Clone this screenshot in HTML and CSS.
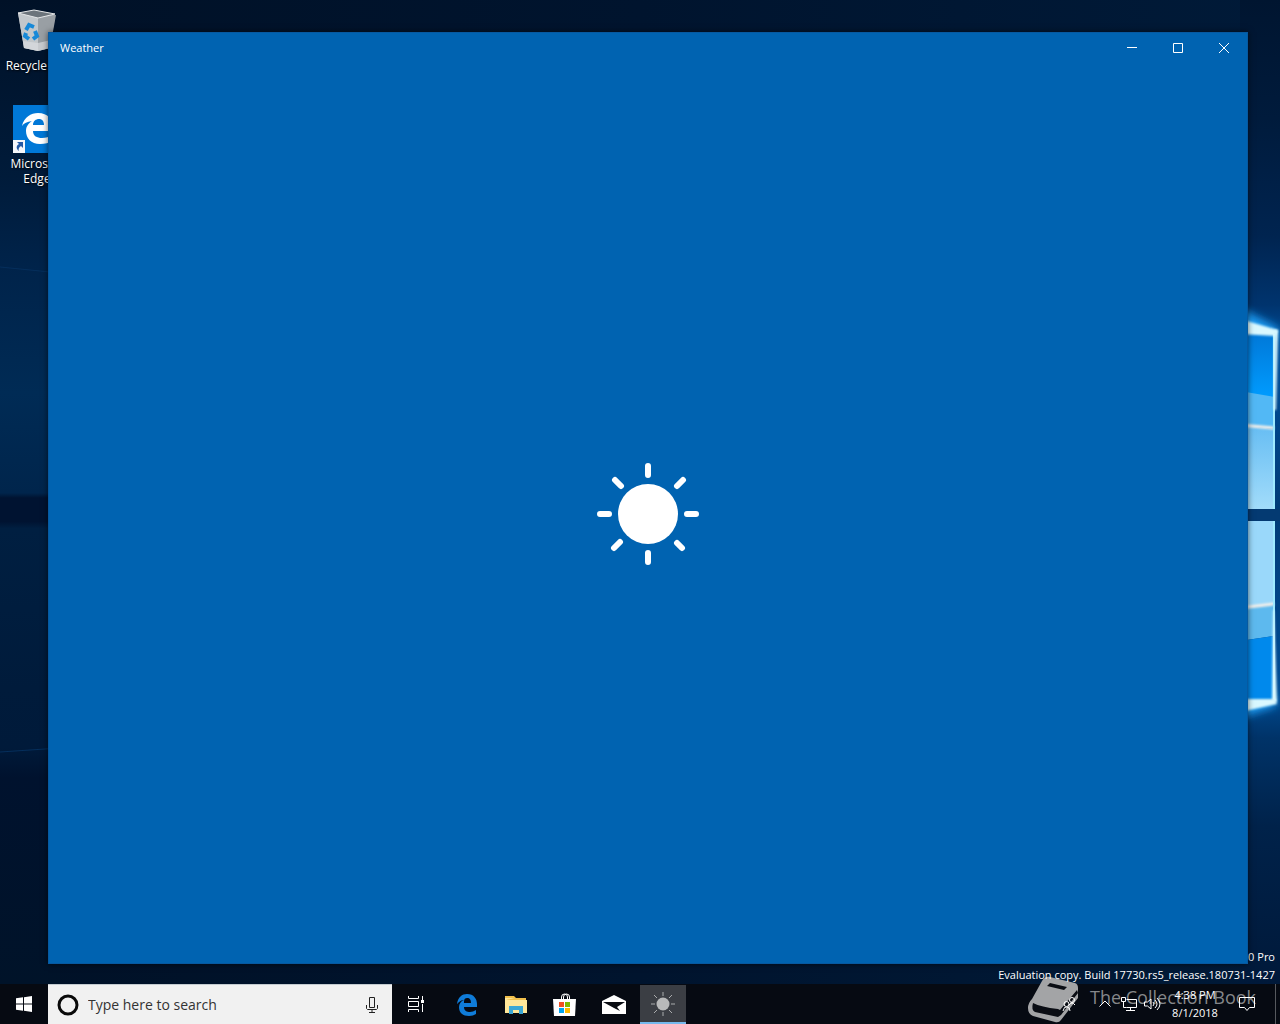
FILE: index.html
```html
<!DOCTYPE html>
<html lang="en">
<head>
<meta charset="utf-8">
<meta name="viewport" content="width=device-width, initial-scale=1">
<title>Desktop</title>
<link rel="stylesheet" href="styles.css">
</head>
<body>
<main class="desktop">
  <svg class="wallpaper wallpaper-left" viewBox="0 0 60 984" preserveAspectRatio="none" aria-hidden="true">
    <defs>
      <linearGradient id="night" x1="0" y1="0" x2="0" y2="1">
        <stop offset="0" stop-color="#001127"/><stop offset=".18" stop-color="#001b3a"/><stop offset=".27" stop-color="#00234a"/><stop offset=".4" stop-color="#002b55"/><stop offset=".501" stop-color="#00254c"/><stop offset=".506" stop-color="#001331"/><stop offset=".53" stop-color="#001331"/><stop offset=".537" stop-color="#001f41"/><stop offset=".7" stop-color="#001b3b"/><stop offset=".76" stop-color="#001a3a"/><stop offset=".79" stop-color="#00122e"/><stop offset="1" stop-color="#001329"/>
      </linearGradient>
    </defs>
    <path fill="url(#night)" d="M0 0h60v984H0z"/>
    <path d="M0 267l60 6M0 752l60-4" stroke="#052f5c" fill="none"/>
  </svg>
  <svg class="wallpaper wallpaper-right" viewBox="0 0 40 984" preserveAspectRatio="none" aria-hidden="true">
    <defs>
      <linearGradient id="sky" x1="0" y1="0" x2="0" y2="1">
        <stop offset="0" stop-color="#001530"/><stop offset=".12" stop-color="#001b3c"/><stop offset=".24" stop-color="#002450"/><stop offset=".31" stop-color="#00346e"/><stop offset=".35" stop-color="#00509c"/><stop offset=".52" stop-color="#003c78"/><stop offset=".7" stop-color="#004d96"/><stop offset=".75" stop-color="#003368"/><stop offset=".84" stop-color="#00224a"/><stop offset="1" stop-color="#00193a"/>
      </linearGradient>
      <linearGradient id="upper" x1="0" y1="0" x2="0" y2="1">
        <stop offset="0" stop-color="#0078d8"/><stop offset="1" stop-color="#009cff"/>
      </linearGradient>
      <linearGradient id="pane" x1="0" y1="0" x2="0" y2="1">
        <stop offset="0" stop-color="#66bdf3"/><stop offset="1" stop-color="#a2dcfa"/>
      </linearGradient>
      <filter id="soft" x="-50%" y="-50%" width="200%" height="200%"><feGaussianBlur stdDeviation="4"/></filter>
      <filter id="edge" x="-50%" y="-50%" width="200%" height="200%"><feGaussianBlur stdDeviation="1"/></filter>
    </defs>
    <path fill="url(#sky)" d="M0 0h40v984H0z"/>
    <path fill="#1f9df5" filter="url(#soft)" d="M0 308l38 20v10H0zM0 696h36v10L0 718z"/>
    <path fill="url(#upper)" d="M0 333h35v65L0 392z"/>
    <path fill="#52b8f5" d="M0 391l35 6v32L0 426z"/>
    <path fill="url(#pane)" d="M0 425l35 4v80H0z"/>
    <path fill="#043a72" d="M0 509h40v12H0z"/>
    <path fill="#9ad8fa" d="M0 521h35v84l-35 4z"/>
    <path fill="#5db9ee" d="M0 608l34-4v32l-34 5z"/>
    <path fill="#0089ec" d="M0 641l34-5v63H0z"/>
    <path fill="none" stroke="#f5f0ea" stroke-width="3" filter="url(#edge)" d="M0 425l34 3M0 608l34-4"/>
    <path fill="none" stroke="#9eeaff" stroke-width="2" d="M34 334v175M34 521v178"/>
    <path fill="#d9f8ff" filter="url(#edge)" d="M0 319l38 11-3 6-35-2zM0 699l35 0 2 5-37 8z"/>
    <path fill="#d9f8ff" filter="url(#edge)" d="M34 330h4l-2 80h-2zM33 610h1l3 92h-5z"/>
  </svg>

  <ul class="shortcuts">
    <li><a class="shortcut" href="#bin">
      <svg width="48" height="48" viewBox="0 0 48 48" aria-hidden="true">
        <path fill="#a8aeb4" d="M5 6l37 2-5 33-12 3-14-3z"/>
        <path fill="#c2c7cb" d="M5 6l20 5v33l-14-3z"/>
        <path fill="#999fa4" d="M25 11l18-3-6 33-12 3z"/>
        <path fill="#dadddf" opacity=".7" d="M10 34l15 2 13-3-1 8-12 3-14-3z"/>
        <path fill="#6c747b" stroke="#e5e7e8" d="M5 6l16-3 21 4-17 4z"/>
        <g fill="none" stroke="#1789d8" stroke-width="4"><path d="M13 23l3-5 5 2M22 24l2 5-4 3M16 32l-4-3 1-3"/></g>
      </svg>
      <span class="shortcut-name">Recycle Bin</span>
    </a></li>
    <li><a class="shortcut" href="#edge-browser">
      <svg width="48" height="48" viewBox="0 0 48 48" aria-hidden="true">
        <path fill="#0078d7" d="M0 0h48v48H0z"/>
        <path fill="#fff" d="M9 21C11 12 18 8 25 8c10 0 15 7 15 14v4H20c0 5 4 7 9 7 4 0 7-1 10-3v6c-3 2-7 3-12 3-9 0-14-6-14-13 0-5 3-8 6-10-5 1-8 2-10 5zM20 20h11c0-4-2-6-5-6s-6 2-6 6z"/>
        <path fill="#f5f7fa" d="M0 35h12v13H0z"/><path fill="#245aa5" d="M4 37h6v6l-2-2c-2 1-3 3-2 5-4-3-2-6 0-7z"/>
      </svg>
      <span class="shortcut-name">Microsoft<br>Edge</span>
    </a></li>
  </ul>

  <p class="build"><span>Windows 10 Pro</span><span>Evaluation copy. Build 17730.rs5_release.180731-1427</span></p>

  <section class="window" aria-label="Weather">
    <header class="titlebar">
      <h1 class="title">Weather</h1>
      <button class="caption" type="button" aria-label="Minimize"><svg width="10" height="10" viewBox="0 0 10 10"><path d="M0 4.500h10"/></svg></button>
      <button class="caption" type="button" aria-label="Maximize"><svg width="10" height="10" viewBox="0 0 10 10"><path d="M.5.5h9v9h-9z"/></svg></button>
      <button class="caption" type="button" aria-label="Close"><svg width="10" height="10" viewBox="0 0 10 10"><path d="M0 0l10 10M10 0L0 10"/></svg></button>
    </header>
    <div class="splash">
      <svg width="102" height="102" viewBox="-51 -51 102 102" role="img" aria-label="Sun">
        <circle r="30" fill="#fff"/>
        <path fill="none" stroke="#fff" stroke-width="6" stroke-linecap="round" d="M0-48v9M0 48v-9M-48 0h9M48 0h-9M-33-34l6 6M35-34l-6 6M-34 34l6-6M34 34l-5-5"/>
      </svg>
    </div>
  </section>
</main>

<footer class="taskbar">
  <div class="watermark" aria-hidden="true">
    <svg width="52" height="48" viewBox="0 0 52 48">
      <path fill="#a3a4a6" d="M14 5Q17 0 22 1l25 6q3 1 3 5v10L33 44q-2 3-6 2L5 40q-5-2-5-8 0-5 4-9z"/>
      <path fill="#0a0d14" d="M22 7l17 4-3 3-17-4zM5 27q8 4 25 6l2 1 17-20 1 3-17 22-3 2L7 36q-4-2-2-9z"/>
    </svg>
    <span>The Collection Book</span>
  </div>
  <button class="start" type="button" aria-label="Start"><svg width="16" height="16" viewBox="0 0 16 16"><path fill="#fff" d="M0 2.300L7 1.300v6.200H0zM8 1.200L16 0v7.500H8zM0 8.500h7v6.200l-7-1zM8 8.500h8V16l-8-1.200z"/></svg></button>
  <label class="search">
    <svg width="22" height="22" viewBox="0 0 22 22" aria-hidden="true"><circle cx="11" cy="11" r="9" fill="none" stroke="#0a0a0a" stroke-width="3"/></svg>
    <input type="text" placeholder="Type here to search" aria-label="Search">
    <svg width="12" height="18" viewBox="0 0 12 18" fill="none" stroke="#222" aria-hidden="true"><path d="M3.500 1.500h5v10h-5zM.5 9v3.500l1 1h9l1-1V9M6 14v3M3 16.500h6"/></svg>
  </label>
  <button class="taskview" type="button" aria-label="Task View"><svg width="18" height="16" viewBox="0 0 18 16" fill="none" stroke="#fff"><path d="M1.500 0v2.500h10V0M1.500 5.500h10v5h-10zM1.500 16v-2.500h10V16M15.500 0v4M15.500 8v8"/><path fill="#fff" stroke="none" d="M14 4h3v3h-3z"/></svg></button>
  <nav class="apps" aria-label="Apps">
    <button type="button" aria-label="Microsoft Edge"><svg width="22" height="22" viewBox="0 0 22 22"><path fill="#0f7cd9" d="M1 10C2 3 6 0 11 0c7 0 10 5 10 10v3H8c0 4 3 5 6 5 2 0 4-1 6-2v4c-2 1-4 2-7 2-6 0-10-3-10-9 0-3 2-6 5-7-3 0-5 2-7 4zM8 9h7c0-3-1-5-4-5S8 7 8 9z"/></svg></button>
    <button type="button" aria-label="File Explorer"><svg width="22" height="20" viewBox="0 0 22 20"><path fill="#f1c04c" d="M0 1h9l2 2h10v15H0z"/><path fill="#ffe79a" d="M1 5h21v13H0V3h10z"/><path fill="#3ba7d5" d="M4 11h14v8h-4v-4H8v4H4z"/></svg></button>
    <button type="button" aria-label="Microsoft Store"><svg width="24" height="24" viewBox="0 0 24 24"><path fill="none" stroke="#fff" d="M8.500 7V4q0-3 3-3t3 3v3M10.500 7V4q0-3 3-3t3 3v3"/><path fill="#fff" d="M0 6h23l-1 17H1z"/><path fill="#f25022" d="M6 9h5v5H6z"/><path fill="#7fba00" d="M12 9h5v5h-5z"/><path fill="#00a4ef" d="M6 15h5v5H6z"/><path fill="#ffb900" d="M12 15h5v5h-5z"/></svg></button>
    <button type="button" aria-label="Mail"><svg width="24" height="20" viewBox="0 0 24 20"><path fill="#fff" d="M0 6l12-6 12 6v13H0z"/><path fill="#090c12" d="M1 7h22l-8 5 3 4-6-3z"/></svg></button>
    <button class="active" type="button" aria-label="Weather"><svg width="24" height="24" viewBox="-12 -12 24 24"><circle r="6.500" fill="#b8b9ba"/><path stroke="#aaacad" d="M0-8v-4M0 8v4M-8 0h-4M8 0h4M-6-6l-3-3M6-6l3-3M-6 6l-3 3M6 6l3 3"/></svg></button>
  </nav>
  <div class="tray">
    <button class="people" type="button" aria-label="People"><svg width="14" height="16" viewBox="0 0 14 16"><circle cx="10" cy="4" r="2.500"/><circle cx="4.500" cy="8" r="2.500"/><path d="M7 9q3-4 6 0M1 15q1-5 4-4 3 0 3 4"/></svg></button>
    <button class="tray-icon" type="button" aria-label="Show hidden icons"><svg width="12" height="8" viewBox="0 0 12 8"><path d="M.5 6.500L6 1l5.500 5.500"/></svg></button>
    <button class="tray-icon" type="button" aria-label="Network"><svg width="16" height="16" viewBox="0 0 16 16"><path d="M5.500 3.500h10v8h-10M9.500 11.500v3M5 14.500h9M.5 1.500h4v4h-4zM2.500 5.500v6h3"/></svg></button>
    <button class="tray-icon" type="button" aria-label="Volume"><svg width="18" height="14" viewBox="0 0 18 14"><path d="M.5 5v4h3L7 12V2L3.500 5zM9 5q2 2 0 4M11 3q4 4 0 8M13 1q6 6 0 12"/></svg></button>
    <button class="clock" type="button"><span>4:38 PM</span><span>8/1/2018</span></button>
    <button class="notices" type="button" aria-label="Notifications"><svg width="16" height="16" viewBox="0 0 16 16"><path d="M.5 1.500h15v10h-5l-2.500 3-2.500-3h-5z"/></svg></button>
    <button class="peek" type="button" aria-label="Show desktop"></button>
  </div>
</footer>
</body>
</html>
```

FILE: styles.css
```css
* { box-sizing: border-box; }
body {
  margin: 0;
  min-height: 100vh;
  display: flex;
  flex-direction: column;
  overflow: hidden;
  background: #00142e;
  color: #fff;
  font: 12px/15px "Open Sans", "Noto Sans", sans-serif;
}
button {
  display: flex;
  align-items: center;
  justify-content: center;
  flex: none;
  padding: 0;
  border: 0;
  background: none;
  color: inherit;
  font: inherit;
}
.desktop {
  position: relative;
  flex: 1;
  background: linear-gradient(90deg, #001127, #00142e 50%, #001a38);
}
.wallpaper { position: absolute; top: 0; height: 100%; }
.wallpaper-left { left: 0; width: 60px; }
.wallpaper-right { right: 0; width: 40px; }
.shortcuts {
  position: relative;
  width: 74px;
  margin: 0;
  padding: 7px 0 0;
  list-style: none;
}
.shortcuts li { height: 98px; }
.shortcut {
  display: flex;
  flex-direction: column;
  align-items: center;
  gap: 3px;
  color: #fff;
  text-align: center;
  text-decoration: none;
  text-shadow: 1px 1px 2px #000;
}
.shortcut-name { white-space: nowrap; }
.build {
  position: absolute;
  z-index: 1;
  right: 5px;
  bottom: 0;
  display: flex;
  flex-direction: column;
  margin: 0;
  font-size: 11px;
  line-height: 18px;
  text-align: right;
}
.window {
  position: absolute;
  z-index: 2;
  inset: 32px 32px 20px 48px;
  display: flex;
  flex-direction: column;
  border: 1px solid #0759a0;
  background: #0063b1;
  box-shadow: 0 0 6px rgba(0, 0, 0, .6);
}
.titlebar { display: flex; height: 30px; }
.title {
  flex: 1;
  margin: 0;
  padding-left: 11px;
  font-size: 11px;
  font-weight: 400;
  line-height: 30px;
}
.caption { width: 46px; }
.caption path { fill: none; stroke: #fff; }
.splash {
  flex: 1;
  display: flex;
  align-items: center;
  justify-content: center;
  padding-top: 2px;
}
.taskbar {
  position: relative;
  display: flex;
  height: 40px;
  background: #060a12;
}
.watermark {
  position: absolute;
  right: 24px;
  bottom: 0;
  display: flex;
  align-items: center;
  gap: 10px;
  color: #85878a;
  font-size: 18px;
  white-space: nowrap;
}
.watermark span { padding-bottom: 6px; }
.start { width: 48px; }
.search {
  display: flex;
  align-items: center;
  gap: 9px;
  width: 344px;
  padding: 0 14px 0 9px;
  border-top: 1px solid #c4cbd0;
  background: #f1f1f1;
}
.search input {
  flex: 1;
  min-width: 0;
  padding: 0;
  border: 0;
  background: none;
  color: #333;
  font: 14px/20px "Open Sans", "Noto Sans", sans-serif;
}
.search input::placeholder { color: #333; opacity: 1; }
.taskview { width: 48px; margin-right: 4px; }
.apps { display: flex; gap: 3px; }
.apps button { width: 46px; padding-top: 1px; }
.apps .active {
  margin-top: 1px;
  border-bottom: 2px solid #76b9ed;
  background: #3b3e44;
}
.tray {
  position: relative;
  display: flex;
  margin-left: auto;
}
.people { width: 48px; }
.tray-icon { width: 24px; }
.people svg, .tray-icon svg, .notices svg { fill: none; stroke: #fff; }
.clock {
  flex-direction: column;
  width: 60px;
  font-size: 11px;
  line-height: 18px;
}
.notices { width: 44px; margin-right: 6px; }
.peek { width: 5px; border-left: 1px solid #56595e; }
```
